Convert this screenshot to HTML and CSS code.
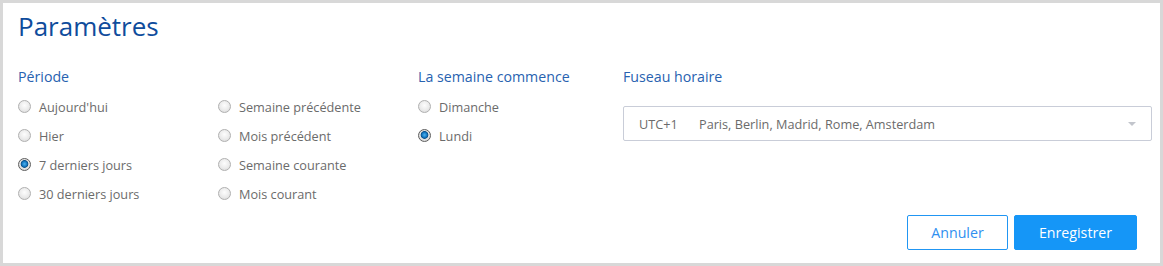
FILE: index.html
```html
<!DOCTYPE html>
<html>
  <head>
    <meta charset="utf-8" />
    <title>Paramètres</title>
    <link rel="stylesheet" href="styles.css">
  </head>
  <body>
    <div class="panel">
      <h1 class="title">Paramètres</h1>
      <div class="settings">
        <div class="group">
          <div class="label">Période</div>
          <div class="options two-cols">
            <label class="option"><input type="radio" name="period" /><span>Aujourd'hui</span></label>
            <label class="option"><input type="radio" name="period" /><span>Semaine précédente</span></label>
            <label class="option"><input type="radio" name="period" /><span>Hier</span></label>
            <label class="option"><input type="radio" name="period" /><span>Mois précédent</span></label>
            <label class="option"><input type="radio" name="period" checked /><span>7 derniers jours</span></label>
            <label class="option"><input type="radio" name="period" /><span>Semaine courante</span></label>
            <label class="option"><input type="radio" name="period" /><span>30 derniers jours</span></label>
            <label class="option"><input type="radio" name="period" /><span>Mois courant</span></label>
          </div>
        </div>
        <div class="group">
          <div class="label">La semaine commence</div>
          <div class="options">
            <label class="option"><input type="radio" name="week" /><span>Dimanche</span></label>
            <label class="option"><input type="radio" name="week" checked /><span>Lundi</span></label>
          </div>
        </div>
        <div class="group">
          <div class="label">Fuseau horaire</div>
          <div class="select">
            <span class="tz-offset">UTC+1</span>
            <span class="tz-name">Paris, Berlin, Madrid, Rome, Amsterdam</span>
            <span class="arrow"></span>
          </div>
        </div>
      </div>
      <div class="actions">
        <button type="button" class="btn btn-outline">Annuler</button>
        <button type="button" class="btn btn-primary">Enregistrer</button>
      </div>
    </div>
  </body>
</html>
```

FILE: styles.css
```css
html, body {
  margin: 0;
  padding: 0;
  background: #fff;
}
body {
  font-family: "Open Sans", sans-serif;
}
.panel {
  box-sizing: border-box;
  width: 1163px;
  height: 266px;
  border: 3px solid #d8d8d8;
  padding: 5px 8px 0 15px;
}
.title {
  margin: 0;
  font-size: 26px;
  font-weight: 400;
  line-height: 36px;
  color: #0f4c9c;
}
.settings {
  display: grid;
  grid-template-columns: 400px 205px 1fr;
  margin-top: 23px;
}
.label {
  font-size: 14.2px;
  line-height: 20px;
  color: #2862b0;
}
.options {
  margin-top: 5px;
  display: grid;
  grid-auto-rows: 29px;
}
.two-cols {
  grid-template-columns: 200px 200px;
}
.option {
  display: flex;
  align-items: center;
  font-size: 12.7px;
  color: #6b6b6b;
}
.option input {
  appearance: none;
  -webkit-appearance: none;
  box-sizing: border-box;
  width: 13px;
  height: 13px;
  margin: 0 8px 0 0;
  border: 1px solid #b0b0b0;
  border-radius: 50%;
  background: radial-gradient(circle at 50% 40%, #fdfdfd 0, #ebebeb 55%, #d4d4d4 100%);
}
.option input:checked {
  border-color: #5e5e5e;
  background: radial-gradient(circle at 50% 45%, #4db3f0 0, #1377c2 2.5px, #0b4f86 3.5px, #e4e4e4 4.2px, #cfcfcf 100%);
}
.select {
  box-sizing: border-box;
  height: 35px;
  margin-top: 19px;
  border: 1px solid #c9cdd8;
  border-radius: 2px;
  display: flex;
  align-items: center;
  padding: 0 15px;
  font-size: 12.7px;
  color: #6b6b6b;
}
.tz-offset {
  width: 60px;
}
.tz-name {
  flex: 1;
}
.arrow {
  width: 0;
  height: 0;
  border-left: 4px solid transparent;
  border-right: 4px solid transparent;
  border-top: 4px solid #c2c5cc;
}
.actions {
  display: flex;
  justify-content: flex-end;
  gap: 6px;
  margin-top: 7px;
  padding-right: 15px;
}
.btn {
  box-sizing: border-box;
  height: 35px;
  border-radius: 2px;
  font-family: "Open Sans", sans-serif;
  font-size: 14.2px;
  cursor: pointer;
}
.btn-outline {
  width: 101px;
  background: #fff;
  border: 1px solid #2196f3;
  color: #2f8ff0;
}
.btn-primary {
  width: 123px;
  background: #1596f7;
  border: 1px solid #1596f7;
  color: #fff;
}
```
